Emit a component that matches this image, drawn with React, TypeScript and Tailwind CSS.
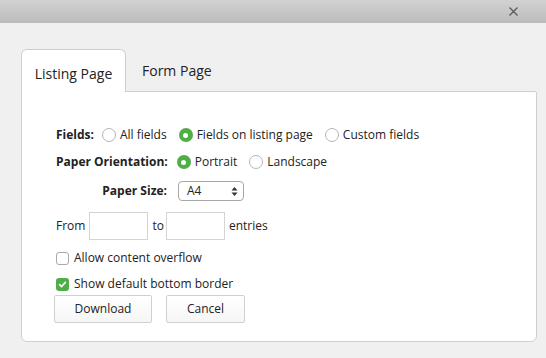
import React from 'react';

const Radio: React.FC<{ checked?: boolean; label: string }> = ({ checked, label }) => (
  <label className="flex items-center gap-[4px]">
    {checked ? (
      <span className="w-[14px] h-[14px] rounded-full bg-[#4fae46] flex items-center justify-center">
        <span className="w-[5px] h-[5px] rounded-full bg-white" />
      </span>
    ) : (
      <span className="w-[14px] h-[14px] rounded-full border border-[#b5b5b5] bg-white" />
    )}
    <span>{label}</span>
  </label>
);

const Checkbox: React.FC<{ checked?: boolean; label: string }> = ({ checked, label }) => (
  <label className="flex items-center gap-[5px] h-[20px]">
    {checked ? (
      <span className="w-[13px] h-[13px] rounded-[3px] bg-[#4fae46] flex items-center justify-center">
        <svg width="9" height="9" viewBox="0 0 10 10">
          <path d="M1.8 5.2 L4 7.3 L8.2 2.6" stroke="white" strokeWidth="1.8" fill="none" strokeLinecap="round" strokeLinejoin="round" />
        </svg>
      </span>
    ) : (
      <span className="w-[13px] h-[13px] rounded-[3px] border border-[#a9a9a9] bg-white" />
    )}
    <span>{label}</span>
  </label>
);

const App: React.FC = () => {
  return (
    <div className="w-[546px] h-[358px] bg-[#f0f0f0] text-[12px] text-[#222] font-['Open_Sans',sans-serif] overflow-hidden">
      <div className="h-[23px] bg-gradient-to-b from-[#d2d2d2] to-[#bcbcbc] flex items-center justify-end pr-[28px]">
        <svg width="9" height="9" viewBox="0 0 9 9">
          <path d="M0.5 0.5 L8.5 8.5 M8.5 0.5 L0.5 8.5" stroke="#5a5a5a" strokeWidth="1.3" />
        </svg>
      </div>

      <div className="pl-[21px] pr-[9px] pt-[26px]">
        <div className="flex items-end text-[14px]">
          <div className="relative z-10 -mb-px h-[43px] w-[105px] bg-white border border-[#cfcfcf] border-b-0 rounded-t-[6px] flex items-center justify-center pt-[4px]">
            Listing Page
          </div>
          <div className="h-[42px] px-[16px] flex items-center">Form Page</div>
        </div>

        <div className="h-[251px] bg-white border border-[#cfcfcf] rounded-b-[6px] rounded-tr-[2px] pl-[34px] pt-[33px]">
          <div className="flex items-center h-[20px]">
            <span className="font-bold mr-[8px]">Fields:</span>
            <div className="flex items-center gap-[12px]">
              <Radio label="All fields" />
              <Radio checked label="Fields on listing page" />
              <Radio label="Custom fields" />
            </div>
          </div>

          <div className="flex items-center h-[20px] mt-[7px]">
            <span className="font-bold mr-[9px]">Paper Orientation:</span>
            <div className="flex items-center gap-[12px]">
              <Radio checked label="Portrait" />
              <Radio label="Landscape" />
            </div>
          </div>

          <div className="flex items-center h-[20px] mt-[9px]">
            <span className="font-bold w-[111px] text-right mr-[11px]">Paper Size:</span>
            <div className="w-[66px] h-[20px] border border-[#a8a8a8] rounded-[4px] flex items-center justify-between pl-[8px] pr-[5px]">
              <span>A4</span>
              <svg width="7" height="11" viewBox="0 0 7 11">
                <path d="M3.5 1 L6.5 4.5 L0.5 4.5 Z M3.5 10 L6.5 6.5 L0.5 6.5 Z" fill="#333" />
              </svg>
            </div>
          </div>

          <div className="flex items-center h-[28px] mt-[11px]">
            <span className="mr-[4px]">From</span>
            <div className="w-[59px] h-[28px] border border-[#d4d4d4]" />
            <span className="ml-[4px] mr-[2px]">to</span>
            <div className="w-[59px] h-[28px] border border-[#d4d4d4]" />
            <span className="ml-[4px]">entries</span>
          </div>

          <div className="mt-[8px]">
            <Checkbox label="Allow content overflow" />
          </div>
          <div className="mt-[6px]">
            <Checkbox checked label="Show default bottom border" />
          </div>

          <div className="flex gap-[14px] mt-[1px] -ml-[2px]">
            <button className="w-[98px] h-[28px] border border-[#d0d0d0] rounded-[2px] bg-gradient-to-b from-white to-[#f6f6f6]">
              Download
            </button>
            <button className="w-[79px] h-[28px] border border-[#d0d0d0] rounded-[2px] bg-gradient-to-b from-white to-[#f6f6f6]">
              Cancel
            </button>
          </div>
        </div>
      </div>
    </div>
  );
};

export default App;
